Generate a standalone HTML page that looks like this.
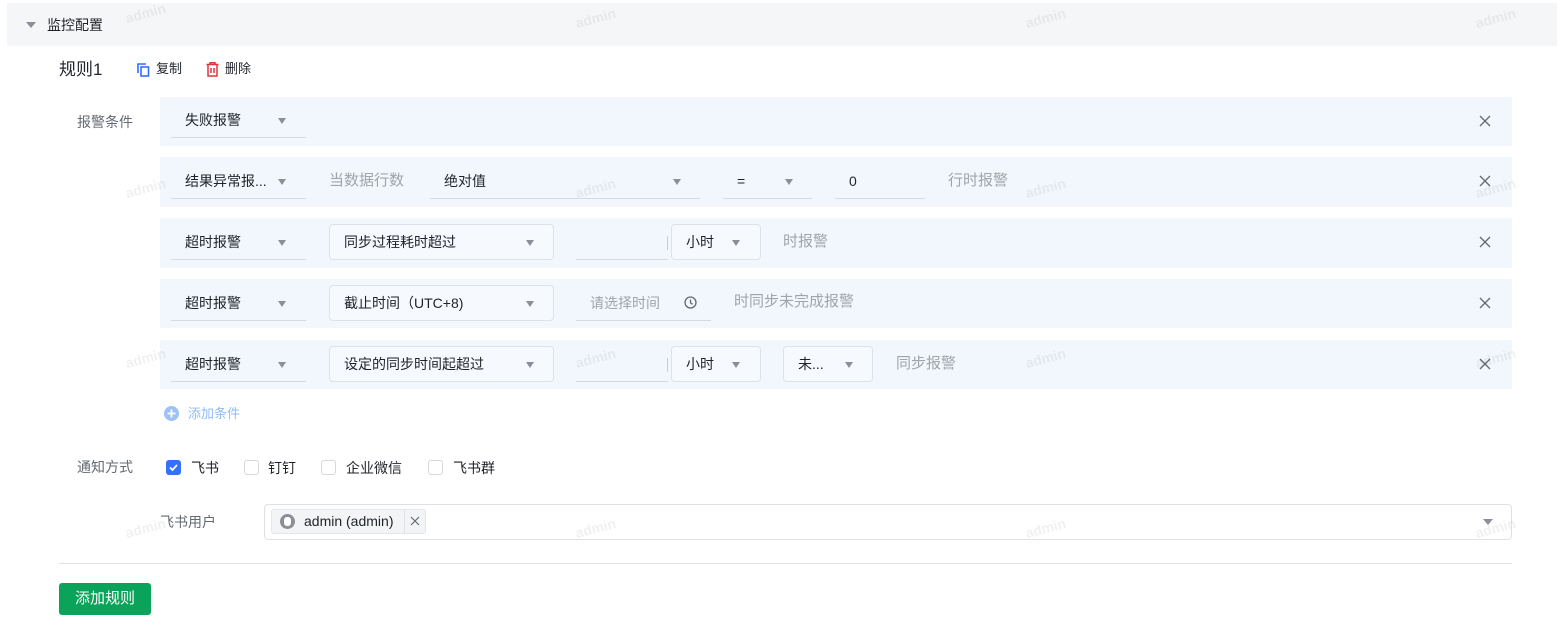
<!DOCTYPE html>
<html><head><meta charset="utf-8"><style>
*{box-sizing:border-box;margin:0;padding:0}
body{width:1560px;height:639px;background:#fff;font-family:"Liberation Sans","Noto Sans CJK SC",sans-serif;font-size:14px;color:#1f2329;position:relative;overflow:hidden}
.a{position:absolute}
.t{position:absolute;white-space:nowrap;line-height:20px}
.row{position:absolute;left:160px;width:1352px;height:49px;background:#f2f6fd}
.sel{position:absolute;height:36px;line-height:36px;padding-left:14px;white-space:nowrap}
.ul{border-bottom:1px solid #d5dae2}
.bd{border:1px solid #dee2e8;border-radius:4px;background:#f6f9fe}
.arr{position:absolute;top:16px;width:0;height:0;border-left:4.5px solid transparent;border-right:4.5px solid transparent;border-top:6px solid #8a8f99}
.g{color:#a0a4ab}
.x{position:absolute;right:20px;top:17px;width:14px;height:14px}
.cb{position:absolute;width:15px;height:15px;border:1px solid #d5d8de;border-radius:3px;background:#fff}
.wm{position:absolute;color:rgba(0,0,0,0.06);font-size:14px;font-weight:bold;transform:rotate(-15deg)}
</style></head><body>
<div class="a" style="left:7px;top:3px;width:1550px;height:43px;background:#f5f6f8"></div>
<div class="a" style="left:26px;top:22px;border-left:5px solid transparent;border-right:5px solid transparent;border-top:6px solid #8a8f99"></div>
<div class="t" style="left:47px;top:15px">监控配置</div>
<div class="t" style="left:59px;top:59px;font-size:17px;line-height:22px">规则1</div>
<svg class="a" style="left:137px;top:63px" width="13" height="14" viewBox="0 0 13 14"><path d="M1 10V1h8" fill="none" stroke="#3370ff" stroke-width="1.6"/><rect x="4" y="4" width="7.5" height="9" fill="none" stroke="#3370ff" stroke-width="1.6"/></svg>
<div class="t" style="left:156px;top:59px;font-size:13px">复制</div>
<svg class="a" style="left:206px;top:62px" width="13" height="15" viewBox="0 0 13 15"><path d="M0.5 2.5h12M4 2.5V0.8h5v1.7M2 2.5v11.5h9V2.5M5 6v5M8 6v5" fill="none" stroke="#e5323e" stroke-width="1.5"/></svg>
<div class="t" style="left:225px;top:59px;font-size:13px">删除</div>
<div class="t" style="left:77px;top:112px;color:#646a73">报警条件</div>

<div class="row" style="top:97px">
 <div class="sel ul" style="left:11px;top:5px;width:135px">失败报警<div class="arr" style="left:107px"></div></div>
 <svg class="x" viewBox="0 0 14 14"><path d="M2 2l10 10M12 2L2 12" stroke="#646a73" stroke-width="1.3"/></svg>
</div>
<div class="row" style="top:157px;height:50px">
 <div class="sel ul" style="left:11px;top:6px;width:135px">结果异常报...<div class="arr" style="left:107px"></div></div>
 <div class="t g" style="left:169px;top:14px;font-size:15px">当数据行数</div>
 <div class="sel ul" style="left:270px;top:6px;width:270px">绝对值<div class="arr" style="left:243px"></div></div>
 <div class="sel ul" style="left:563px;top:6px;width:89px">=<div class="arr" style="left:62px"></div></div>
 <div class="sel ul" style="left:675px;top:6px;width:90px">0</div>
 <div class="t g" style="left:788px;top:14px;font-size:15px">行时报警</div>
 <svg class="x" viewBox="0 0 14 14"><path d="M2 2l10 10M12 2L2 12" stroke="#646a73" stroke-width="1.3"/></svg>
</div>
<div class="row" style="top:218px;height:50px">
 <div class="sel ul" style="left:11px;top:6px;width:135px">超时报警<div class="arr" style="left:107px"></div></div>
 <div class="sel bd" style="left:169px;top:6px;width:225px;line-height:34px">同步过程耗时超过<div class="arr" style="left:196px;top:15px"></div></div>
 <div class="sel ul" style="left:416px;top:6px;width:92px"></div>
 <div class="a" style="left:507px;top:18px;width:1px;height:14px;background:#ccc"></div>
 <div class="sel bd" style="left:511px;top:6px;width:90px;line-height:34px">小时<div class="arr" style="left:60px;top:15px"></div></div>
 <div class="t g" style="left:623px;top:14px;font-size:15px">时报警</div>
 <svg class="x" viewBox="0 0 14 14"><path d="M2 2l10 10M12 2L2 12" stroke="#646a73" stroke-width="1.3"/></svg>
</div>
<div class="row" style="top:279px">
 <div class="sel ul" style="left:11px;top:6px;width:135px">超时报警<div class="arr" style="left:107px"></div></div>
 <div class="sel bd" style="left:169px;top:6px;width:225px;line-height:34px">截止时间（UTC+8)<div class="arr" style="left:196px;top:15px"></div></div>
 <div class="sel ul g" style="left:416px;top:6px;width:135px">请选择时间</div>
 <svg class="a" style="left:524px;top:17px" width="13" height="13" viewBox="0 0 13 13"><circle cx="6.5" cy="6.5" r="5.5" fill="none" stroke="#646a73" stroke-width="1.3"/><path d="M6.5 3.5v3.3l2 1.5" fill="none" stroke="#646a73" stroke-width="1.3"/></svg>
 <div class="t g" style="left:574px;top:13px;font-size:15px">时同步未完成报警</div>
 <svg class="x" viewBox="0 0 14 14"><path d="M2 2l10 10M12 2L2 12" stroke="#646a73" stroke-width="1.3"/></svg>
</div>
<div class="row" style="top:340px">
 <div class="sel ul" style="left:11px;top:6px;width:135px">超时报警<div class="arr" style="left:107px"></div></div>
 <div class="sel bd" style="left:169px;top:6px;width:225px;line-height:34px">设定的同步时间起超过<div class="arr" style="left:196px;top:15px"></div></div>
 <div class="sel ul" style="left:416px;top:6px;width:92px"></div>
 <div class="a" style="left:507px;top:18px;width:1px;height:14px;background:#ccc"></div>
 <div class="sel bd" style="left:511px;top:6px;width:90px;line-height:34px">小时<div class="arr" style="left:60px;top:15px"></div></div>
 <div class="sel bd" style="left:623px;top:6px;width:90px;line-height:34px">未...<div class="arr" style="left:61px;top:15px"></div></div>
 <div class="t g" style="left:736px;top:14px;font-size:15px">同步报警</div>
 <svg class="x" viewBox="0 0 14 14"><path d="M2 2l10 10M12 2L2 12" stroke="#646a73" stroke-width="1.3"/></svg>
</div>
<svg class="a" style="left:164px;top:406px" width="15" height="15" viewBox="0 0 15 15"><circle cx="7.5" cy="7.5" r="7.5" fill="#9cc2f7"/><path d="M7.5 3.5v8M3.5 7.5h8" stroke="#fff" stroke-width="1.8"/></svg>
<div class="t" style="left:188px;top:404px;font-size:13px;color:#8fbcf5">添加条件</div>

<div class="t" style="left:77px;top:457px;font-size:14px;color:#646a73">通知方式</div>
<div class="cb" style="left:166px;top:460px;background:#3370ff;border-color:#3370ff"><svg width="13" height="13" viewBox="0 0 13 13" style="position:absolute;left:0;top:0"><path d="M3 6.5l2.5 2.5L10 4" fill="none" stroke="#fff" stroke-width="1.8"/></svg></div>
<div class="t" style="left:191px;top:458px">飞书</div>
<div class="cb" style="left:244px;top:460px"></div>
<div class="t" style="left:268px;top:458px">钉钉</div>
<div class="cb" style="left:321px;top:460px"></div>
<div class="t" style="left:346px;top:458px">企业微信</div>
<div class="cb" style="left:428px;top:460px"></div>
<div class="t" style="left:453px;top:458px">飞书群</div>

<div class="t" style="left:160px;top:512px;color:#646a73">飞书用户</div>
<div class="a" style="left:264px;top:504px;width:1248px;height:36px;border:1px solid #dee0e3;border-radius:4px"></div>
<div class="a" style="left:271px;top:509px;width:155px;height:25px;background:#f3f4f6;border:1px solid #e4e6ea;border-radius:3px"></div>
<div class="a" style="left:404px;top:510px;width:1px;height:23px;background:#e0e2e6"></div>
<div class="a" style="left:280px;top:514px;width:15px;height:15px;border-radius:50%;background:#8c8f96"></div>
<div class="a" style="left:284px;top:517px;width:7px;height:9px;border-radius:3px;background:#fff"></div>
<div class="t" style="left:304px;top:511px">admin (admin)</div>
<svg class="a" style="left:410px;top:516px" width="10" height="10" viewBox="0 0 10 10"><path d="M1 1l8 8M9 1L1 9" stroke="#646a73" stroke-width="1.2"/></svg>
<div class="a" style="left:1483px;top:519px;border-left:5px solid transparent;border-right:5px solid transparent;border-top:6px solid #8a8f99"></div>

<div class="a" style="left:59px;top:563px;width:1453px;height:1px;background:#dee0e3"></div>
<div class="a" style="left:59px;top:583px;width:92px;height:32px;background:#0aa35a;border-radius:3px;color:#fff;font-size:15px;line-height:32px;text-align:center">添加规则</div>

<div class="wm" style="left:125px;top:5px">admin</div>
<div class="wm" style="left:575px;top:10px">admin</div>
<div class="wm" style="left:1025px;top:10px">admin</div>
<div class="wm" style="left:1475px;top:10px">admin</div>
<div class="wm" style="left:125px;top:180px">admin</div>
<div class="wm" style="left:575px;top:180px">admin</div>
<div class="wm" style="left:1025px;top:180px">admin</div>
<div class="wm" style="left:1475px;top:180px">admin</div>
<div class="wm" style="left:125px;top:350px">admin</div>
<div class="wm" style="left:575px;top:350px">admin</div>
<div class="wm" style="left:1025px;top:350px">admin</div>
<div class="wm" style="left:1475px;top:350px">admin</div>
<div class="wm" style="left:125px;top:520px">admin</div>
<div class="wm" style="left:575px;top:520px">admin</div>
<div class="wm" style="left:1025px;top:520px">admin</div>
<div class="wm" style="left:1475px;top:520px">admin</div>
</body></html>
